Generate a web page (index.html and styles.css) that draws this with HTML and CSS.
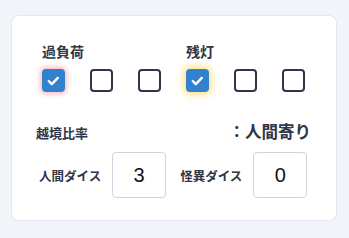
FILE: index.html
```html
<!DOCTYPE html>
<html lang="ja">
<head>
    <meta charset="UTF-8">
    <meta name="viewport" content="width=device-width, initial-scale=1.0">
    <title>ダイス設定</title>
    <link rel="stylesheet" href="styles.css">
</head>
<body>
    <div class="card">
        <div class="groups">
            <div class="group">
                <h3>過負荷</h3>
                <div class="boxes">
                    <span class="box checked red">
                        <svg viewBox="0 0 22 22" width="22" height="22"><polyline points="5.5,11 9,14.5 16,7.5" fill="none" stroke="#fff" stroke-width="2.8" stroke-linecap="round" stroke-linejoin="round"/></svg>
                    </span>
                    <span class="box"></span>
                    <span class="box"></span>
                </div>
            </div>
            <div class="group">
                <h3>残灯</h3>
                <div class="boxes">
                    <span class="box checked yellow">
                        <svg viewBox="0 0 22 22" width="22" height="22"><polyline points="5.5,11 9,14.5 16,7.5" fill="none" stroke="#fff" stroke-width="2.8" stroke-linecap="round" stroke-linejoin="round"/></svg>
                    </span>
                    <span class="box"></span>
                    <span class="box"></span>
                </div>
            </div>
        </div>

        <div class="ratio">
            <span class="ratio-label">越境比率</span>
            <span class="ratio-value">：人間寄り</span>
        </div>

        <div class="dice-row">
            <div class="dice">
                <span class="dice-label">人間ダイス</span>
                <div class="dice-input">3</div>
            </div>
            <div class="dice second">
                <span class="dice-label">怪異ダイス</span>
                <div class="dice-input">0</div>
            </div>
        </div>
    </div>
</body>
</html>
```

FILE: styles.css
```css
* {
    margin: 0;
    padding: 0;
    box-sizing: border-box;
}

body {
    font-family: 'Noto Sans CJK JP', 'Noto Sans', sans-serif;
    background: #f1f5f9;
    padding: 15px 12px 0 11px;
    color: #2d3748;
}

.card {
    width: 326px;
    height: 206px;
    background: #fff;
    border: 1px solid #e2e8f0;
    border-radius: 8px;
    padding: 25px 0 0 0;
}

.groups {
    display: flex;
    justify-content: space-between;
    padding: 0 31px 0 30px;
}

.group h3 {
    font-size: 14px;
    font-weight: bold;
    line-height: 20px;
    margin-bottom: 8px;
}

.boxes {
    display: flex;
    gap: 25px;
}

.box {
    width: 23px;
    height: 23px;
    border: 2px solid #2d3748;
    border-radius: 4px;
    display: flex;
    align-items: center;
    justify-content: center;
}

.box.checked {
    background: #3182ce;
    border-color: #3182ce;
}

.box.red {
    box-shadow: 0 0 5px 2px rgba(255, 60, 60, 0.35);
}

.box.yellow {
    box-shadow: 0 0 6px 3px rgba(255, 200, 40, 0.5);
}

.ratio {
    display: flex;
    justify-content: space-between;
    align-items: baseline;
    padding: 0 25px 0 24px;
    margin-top: 27px;
}

.ratio-label {
    font-size: 13px;
    font-weight: bold;
}

.ratio-value {
    font-size: 16.5px;
    font-weight: bold;
}

.dice-row {
    display: flex;
    align-items: center;
    padding-left: 27px;
    margin-top: 9px;
}

.dice {
    display: flex;
    align-items: center;
    gap: 11px;
}

.dice.second {
    margin-left: 14px;
}

.dice-label {
    font-size: 12.5px;
    font-weight: bold;
}

.dice-input {
    width: 54px;
    height: 46px;
    border: 1px solid #cbd5e0;
    border-radius: 4px;
    display: flex;
    align-items: center;
    justify-content: center;
    font-family: 'Liberation Sans', Arial, sans-serif;
    font-size: 20px;
    color: #111;
}
```
